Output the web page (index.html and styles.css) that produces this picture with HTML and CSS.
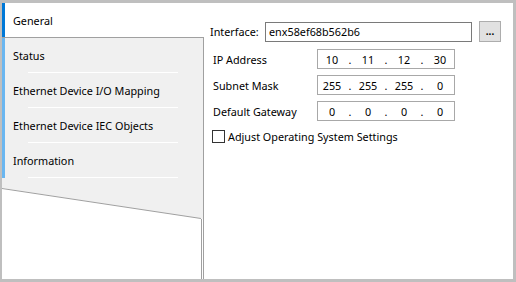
FILE: index.html
```html
<!DOCTYPE html>
<html lang="en">
<head>
    <meta charset="UTF-8">
    <title>Ethernet Device - General</title>
    <link rel="stylesheet" href="styles.css">
</head>
<body>
    <div class="window">
        <!-- Left tab column -->
        <div class="sidebar">
            <div class="tab active">General</div>
            <div class="tab-group">
                <div class="tab">Status</div>
                <div class="tab">Ethernet Device I/O Mapping</div>
                <div class="tab">Ethernet Device IEC Objects</div>
                <div class="tab">Information</div>
                <svg class="page-curl" width="201" height="41" viewBox="0 0 201 41">
                    <polygon points="0,0 201,0 201,41 0,10" fill="#f0f0f0"/>
                    <line x1="0" y1="10.5" x2="199" y2="40.5" stroke="#a0a0a0" stroke-width="1"/>
                </svg>
                <div class="sidebar-rest"></div>
            </div>
        </div>

        <!-- General settings -->
        <div class="panel">
            <div class="row-interface">
                <label class="label-interface">Interface:</label>
                <div class="text-input">enx58ef68b562b6</div>
                <button class="browse">...</button>
            </div>

            <div class="ip-grid">
                <span class="ip-label">IP Address</span>
                <div class="ip-box">
                    <span class="seg">10</span><span class="dot">.</span>
                    <span class="seg">11</span><span class="dot">.</span>
                    <span class="seg">12</span><span class="dot">.</span>
                    <span class="seg">30</span>
                </div>

                <span class="ip-label">Subnet Mask</span>
                <div class="ip-box">
                    <span class="seg">255</span><span class="dot">.</span>
                    <span class="seg">255</span><span class="dot">.</span>
                    <span class="seg">255</span><span class="dot">.</span>
                    <span class="seg">0</span>
                </div>

                <span class="ip-label">Default Gateway</span>
                <div class="ip-box">
                    <span class="seg">0</span><span class="dot">.</span>
                    <span class="seg">0</span><span class="dot">.</span>
                    <span class="seg">0</span><span class="dot">.</span>
                    <span class="seg">0</span>
                </div>
            </div>

            <label class="check-row">
                <span class="checkbox"></span>
                Adjust Operating System Settings
            </label>
        </div>
    </div>
</body>
</html>
```

FILE: styles.css
```css
* {
    margin: 0;
    padding: 0;
    box-sizing: border-box;
}

body {
    font-family: 'Noto Sans', 'Liberation Sans', sans-serif;
    font-size: 10.8px;
    color: #000;
    background: #fff;
}

.window {
    width: 516px;
    height: 282px;
    border: 3px solid #bfbfbf;
    border-left-width: 2px;
    display: flex;
    background: #fff;
}

/* Tabs */
.sidebar {
    width: 202px;
    display: flex;
    flex-direction: column;
}

.tab {
    height: 35px;
    display: flex;
    align-items: center;
    padding-left: 8px;
    border-left: 3px solid #6ab6f0;
    background: #f0f0f0 linear-gradient(#fff, #fff) no-repeat 23px 100% / 150px 1px;
}

.tab.active {
    height: 34px;
    border-left-color: #0078d7;
    background: #fff;
}

.tab-group {
    flex: 1;
    display: flex;
    flex-direction: column;
    border-top: 1px solid #a0a0a0;
    border-right: 1px solid #a0a0a0;
}

.page-curl {
    display: block;
}

.sidebar-rest {
    flex: 1;
    width: 200px;
    border-right: 1px solid #a0a0a0;
}

/* Settings panel */
.panel {
    flex: 1;
    padding-top: 18px;
}

.row-interface {
    display: flex;
    align-items: center;
    height: 21px;
}

.label-interface {
    width: 55px;
    margin-left: 6px;
}

.text-input {
    width: 207px;
    height: 20px;
    border: 1px solid #7a7a7a;
    padding-left: 3px;
    display: flex;
    align-items: center;
}

.browse {
    width: 22px;
    height: 21px;
    margin-left: 7px;
    background: #e1e1e1;
    border: 1px solid #adadad;
    font-family: inherit;
    font-size: 10px;
    font-weight: bold;
    line-height: 1;
    padding-bottom: 2px;
}

.ip-grid {
    display: grid;
    grid-template-columns: 104px 138px;
    grid-auto-rows: 20px;
    row-gap: 6px;
    margin: 7px 0 0 9px;
    align-items: center;
}

.ip-box {
    height: 20px;
    border: 1px solid #a8a8a8;
    display: flex;
    align-items: center;
    padding-left: 2px;
}

.seg {
    width: 24px;
    text-align: center;
}

.dot {
    width: 12px;
    text-align: center;
}

.check-row {
    display: flex;
    align-items: center;
    gap: 3px;
    margin: 8px 0 0 8px;
}

.checkbox {
    width: 13px;
    height: 13px;
    border: 1px solid #333;
    background: #fff;
}
```
